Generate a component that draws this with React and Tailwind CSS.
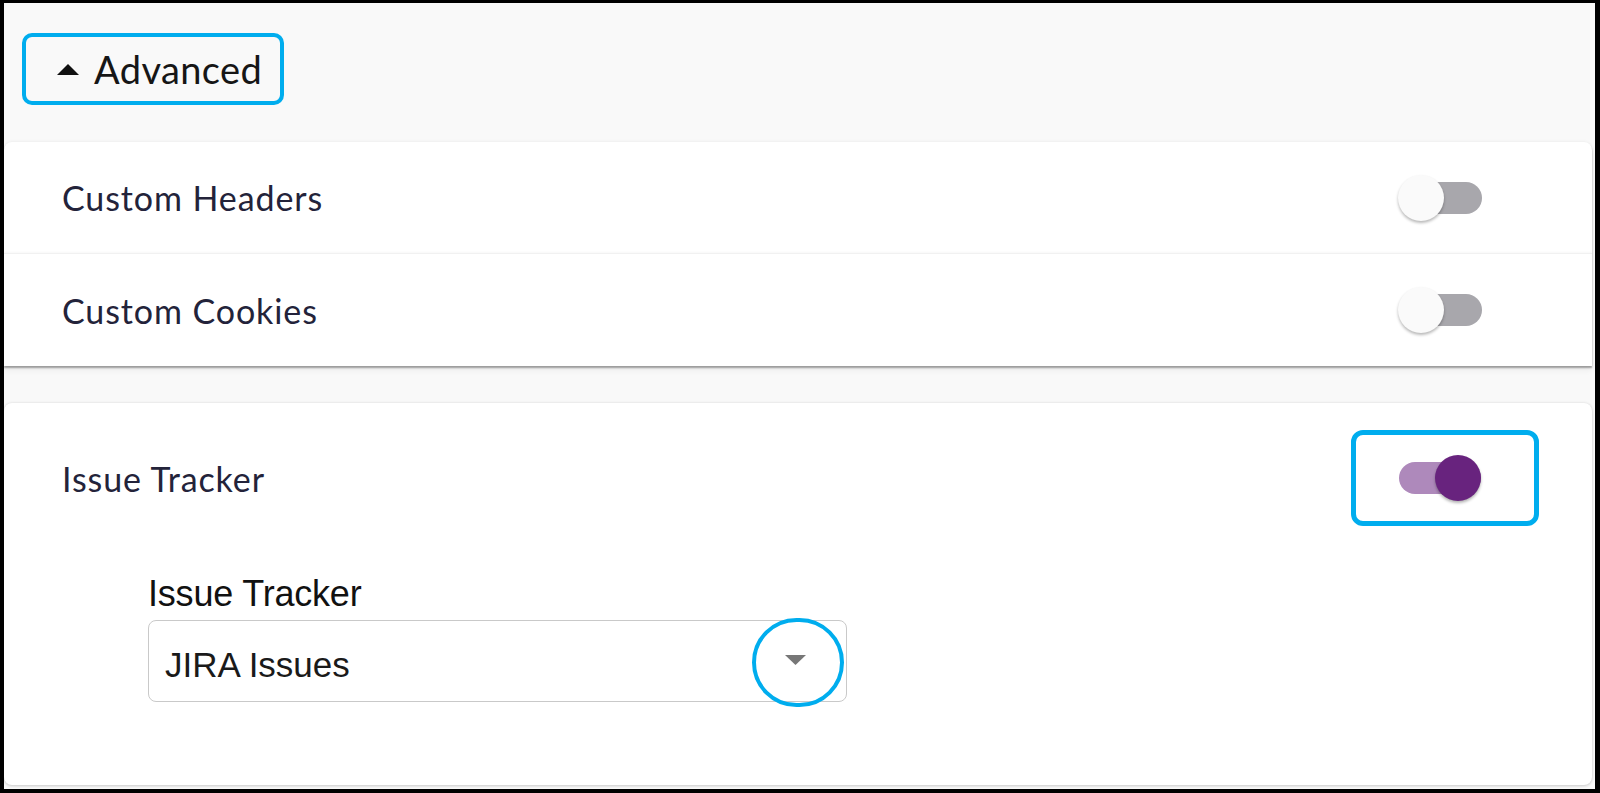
import React from "react";

function Toggle({ on }) {
  return (
    <div className="relative w-[86px] h-[46px] shrink-0">
      <div
        className={
          on
            ? "absolute left-[1px] right-[3px] top-[7px] h-[32px] rounded-full bg-[#ae89bb]"
            : "absolute left-[3px] right-[2px] top-[7px] h-[32px] rounded-full bg-[#a8a7ac]"
        }
      />
      <div
        className={
          on
            ? "absolute top-0 left-[37px] w-[46px] h-[46px] rounded-full bg-[#68237e] shadow-[0_2px_3px_rgba(0,0,0,0.3)]"
            : "absolute top-0 left-0 w-[46px] h-[46px] rounded-full bg-[#fafafa] shadow-[0_2px_3px_rgba(0,0,0,0.28)]"
        }
      />
    </div>
  );
}

const rowText = "text-[34px] text-[#23233a] font-['Lato','Noto_Sans',sans-serif] tracking-[0.9px]";

export default function App() {
  return (
    <div className="w-[1600px] h-[793px] bg-black pl-[4px] pt-[3px] pr-[5px] pb-[4px]">
      <div className="h-full bg-[#f9f9f9] flex flex-col">
        {/* Header */}
        <div className="h-[139px] shrink-0 pt-[30px] pl-[18px]">
          <div className="w-[262px] h-[72px] border-[4px] border-[#00adee] rounded-[10px] flex items-center pl-[31px]">
            <svg width="22" height="11" viewBox="0 0 22 11" className="shrink-0">
              <polygon points="0,11 11,0 22,11" fill="#111" />
            </svg>
            <span className="ml-[15px] text-[38px] leading-none text-[#161616] font-['Lato','Noto_Sans',sans-serif] tracking-[0.4px]">
              Advanced
            </span>
          </div>
        </div>

        {/* Card 1 */}
        <div className="mr-[3px] bg-white rounded-t-[8px] shadow-[0_2px_2px_rgba(0,0,0,0.35),0_4px_6px_rgba(0,0,0,0.06),0_-1px_3px_rgba(0,0,0,0.04)] shrink-0">
          <div className="h-[111px] flex items-center justify-between pl-[58px] pr-[108px]">
            <span className={rowText}>Custom Headers</span>
            <Toggle on={false} />
          </div>
          <div className="h-[113px] flex items-center justify-between pl-[58px] pr-[108px] border-t border-[#f1f1f1] shadow-[0_-1px_2px_rgba(0,0,0,0.03)]">
            <span className={rowText}>Custom Cookies</span>
            <Toggle on={false} />
          </div>
        </div>

        <div className="h-[37px] shrink-0" />

        {/* Card 2 */}
        <div className="relative mr-[3px] mb-[4px] flex-1 bg-white rounded-[8px] shadow-[0_1px_3px_rgba(0,0,0,0.2),0_-1px_3px_rgba(0,0,0,0.04)]">
          <div className="h-[150px] flex items-center justify-between pl-[58px] pr-[53px]">
            <span className={rowText}>Issue Tracker</span>
            <div className="w-[188px] h-[96px] border-[5px] border-[#00adee] rounded-[12px] flex items-center pl-[42px]">
              <Toggle on={true} />
            </div>
          </div>

          <div className="pl-[144px] pt-[23px]">
            <div className="text-[36px] leading-none text-[#111] font-['Liberation_Sans',Arial,sans-serif] tracking-[-0.2px]">
              Issue Tracker
            </div>
            <div className="relative mt-[8px] w-[699px] h-[82px] border border-[#c9c9c9] rounded-[8px] flex items-center justify-between pl-[16px] pr-[40px] pt-[6px]">
              <span className="text-[35px] leading-none text-[#1a1a1a] font-['Liberation_Sans',Arial,sans-serif]">
                JIRA Issues
              </span>
              <svg width="21" height="10" viewBox="0 0 21 10" className="shrink-0 -mt-[8px]">
                <polygon points="0,0 21,0 10.5,10" fill="#777" />
              </svg>
              <div className="absolute left-[603px] top-[-3px] w-[92px] h-[89px] rounded-full border-[4px] border-[#00adee]" />
            </div>
          </div>
        </div>
      </div>
    </div>
  );
}
